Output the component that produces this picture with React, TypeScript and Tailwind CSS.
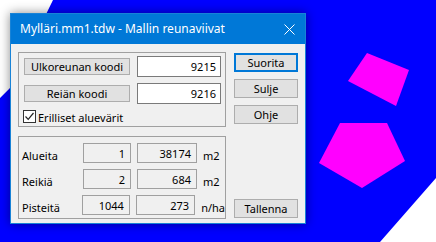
/** Mallin reunaviivat dialog over a drawing canvas. */

const font = { fontFamily: '"Segoe UI", "Noto Sans", Arial, sans-serif' };

function WinButton({ label, primary = false }: { label: string; primary?: boolean }) {
  return (
    <button
      className={
        'flex h-[19px] w-[64px] items-center justify-center bg-[#e1e1e1] text-[11px] leading-none text-black ' +
        (primary ? 'border-2 border-[#0078d7]' : 'border border-[#adadad]')
      }
    >
      {label}
    </button>
  );
}

function ReadOnly({ value, w }: { value: string; w: string }) {
  return (
    <div className={`${w} flex h-[20px] items-center justify-end border border-[#a0a0a0] bg-[#f0f0f0] pr-[5px] text-[11px]`}>
      {value}
    </div>
  );
}

const stats = [
  { label: 'Alueita', count: '1', amount: '38174', unit: 'm2' },
  { label: 'Reikiä', count: '2', amount: '684', unit: 'm2' },
  { label: 'Pisteitä', count: '1044', amount: '273', unit: 'n/ha' },
];

export default function App() {
  return (
    <div className="relative h-[242px] w-[436px] overflow-hidden bg-white" style={font}>
      <svg className="absolute inset-0" width="436" height="242" viewBox="0 0 436 242">
        <polygon points="53,0 436,0 436,178 380,242 0,242 0,98 10,88" fill="#0000ff" />
        <polygon points="367,53 409,70 396,106 348,81" fill="#ff00ff" />
        <polygon points="340,123 387,123 405,161 362,188 319,163" fill="#ff00ff" />
      </svg>

      <div className="absolute left-[10px] top-[13px] flex h-[211px] w-[296px] flex-col border border-[#1883d7] bg-[#f0f0f0] shadow-[0_0_10px_rgba(0,0,0,0.45)]">
        <div className="flex h-[30px] shrink-0 items-center justify-between bg-[#0078d7] pl-[9px] pr-[10px] text-[12px] text-white">
          <span>Mylläri.mm1.tdw - Mallin reunaviivat</span>
          <svg width="11" height="11" viewBox="0 0 11 11">
            <path d="M0.5 0.5 L10.5 10.5 M10.5 0.5 L0.5 10.5" stroke="white" strokeWidth="1" />
          </svg>
        </div>

        <div className="flex flex-1 gap-[8px] pl-[7px] pt-[8px] text-[11px] leading-none text-black">
          <div className="flex w-[208px] flex-col gap-[9px]">
            <div className="flex h-[75px] shrink-0 flex-col border border-[#a0a0a0] pl-[5px] pr-[4px] pt-[3px]">
              <div className="flex h-[21px] items-center gap-[7px]">
                <button className="h-[17px] w-[106px] border border-[#adadad] bg-[#e1e1e1] text-[11px] leading-none">
                  Ulkoreunan koodi
                </button>
                <div className="flex h-[21px] w-[84px] items-center justify-end border border-[#7a7a7a] bg-white pr-[4px]">
                  9215
                </div>
              </div>
              <div className="mt-[6px] flex h-[21px] items-center gap-[7px]">
                <button className="h-[17px] w-[106px] border border-[#adadad] bg-[#e1e1e1] text-[11px] leading-none">
                  Reiän koodi
                </button>
                <div className="flex h-[21px] w-[84px] items-center justify-end border border-[#7a7a7a] bg-white pr-[4px]">
                  9216
                </div>
              </div>
              <label className="-ml-[1px] mt-[5px] flex h-[14px] items-center gap-[2px]">
                <span className="flex h-[13px] w-[13px] items-center justify-center border border-[#333] bg-white">
                  <svg width="11" height="11" viewBox="0 0 11 11">
                    <path d="M1.5 5.5 L4.2 8.3 L9.5 2" stroke="#222" strokeWidth="1.2" fill="none" />
                  </svg>
                </span>
                <span className="pt-[3px]">Erilliset aluevärit</span>
              </label>
            </div>

            <div className="flex h-[83px] shrink-0 flex-col gap-[6px] border border-[#a0a0a0] pl-[3px] pt-[6px]">
              {stats.map((s) => (
                <div key={s.label} className="flex h-[20px] items-center">
                  <span className="w-[61px] pt-[5px]">{s.label}</span>
                  <ReadOnly value={s.count} w="w-[48px]" />
                  <div className="w-[6px]" />
                  <ReadOnly value={s.amount} w="w-[60px]" />
                  <span className="pl-[6px] pt-[5px]">{s.unit}</span>
                </div>
              ))}
            </div>
          </div>

          <div className="flex flex-col pb-[5px]">
            <div className="mt-[1px] flex flex-col gap-[7px]">
              <WinButton label="Suorita" primary />
              <WinButton label="Sulje" />
              <WinButton label="Ohje" />
            </div>
            <div className="mt-auto">
              <WinButton label="Tallenna" />
            </div>
          </div>
        </div>
      </div>
    </div>
  );
}
